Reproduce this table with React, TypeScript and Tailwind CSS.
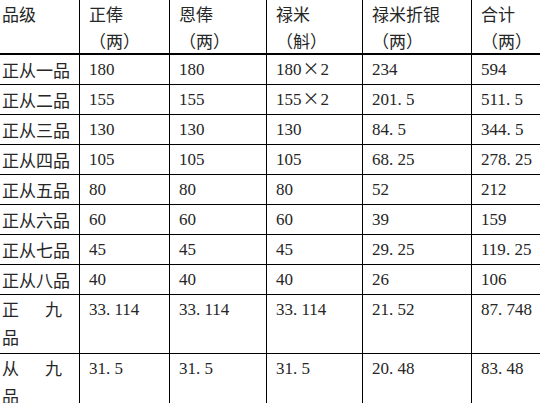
import React from "react";

const cols = "grid grid-cols-[80px_90px_97px_96px_109px_1fr]";

const rows: string[][] = [
  ["正从一品", "180", "180", "180×2", "234", "594"],
  ["正从二品", "155", "155", "155×2", "201.5", "511.5"],
  ["正从三品", "130", "130", "130", "84.5", "344.5"],
  ["正从四品", "105", "105", "105", "68.25", "278.25"],
  ["正从五品", "80", "80", "80", "52", "212"],
  ["正从六品", "60", "60", "60", "39", "159"],
  ["正从七品", "45", "45", "45", "29.25", "119.25"],
  ["正从八品", "40", "40", "40", "26", "106"],
];

const tallRows: { a: string; b: string; vals: string[] }[] = [
  { a: "正", b: "九", vals: ["33.114", "33.114", "33.114", "21.52", "87.748"] },
  { a: "从", b: "九", vals: ["31.5", "31.5", "31.5", "20.48", "83.48"] },
];

// SimSun style: dot and times sign take a full cell
const Num = ({ v }: { v: string }) => {
  const parts = v.split(/([.×])/);
  return (
    <span className="whitespace-nowrap">
      {parts.map((p, i) =>
        p === "." ? (
          <span key={i} className="inline-block w-[8.5px] text-left">.</span>
        ) : p === "×" ? (
          <span
            key={i}
            className="inline-block w-[19px] text-center leading-none font-['Noto_Sans_CJK_SC',sans-serif]"
          >
            ×
          </span>
        ) : (
          <span key={i}>{p}</span>
        )
      )}
    </span>
  );
};

const head = [
  ["正俸", "（两）"],
  ["恩俸", "（两）"],
  ["禄米", "（斛）"],
  ["禄米折银", "（两）"],
  ["合计", "（两）"],
];

export default function App() {
  return (
    <div className="w-[540px] h-[403px] overflow-hidden bg-white text-[#262626] text-[17px] font-['Liberation_Serif','Noto_Sans_CJK_SC',serif]">
      {/* header */}
      <div className={`${cols} h-[55px] border-b-2 border-black`}>
        <div className="border-r border-black pl-[2px] leading-[27px] font-['Noto_Sans_CJK_SC',sans-serif]">
          品级
        </div>
        {head.map(([t, u], i) => (
          <div
            key={t}
            className={`pl-[9px] leading-[27px] font-['Noto_Sans_CJK_SC',sans-serif] ${
              i < head.length - 1 ? "border-r border-black" : ""
            }`}
          >
            <div>{t}</div>
            <div>{u}</div>
          </div>
        ))}
      </div>

      {rows.map((r) => (
        <div key={r[0]} className={`${cols} h-[30px] border-b border-black`}>
          <div className="border-r border-black pl-[2px] pt-[1px] leading-[28px] font-['Noto_Sans_CJK_SC',sans-serif]">
            {r[0]}
          </div>
          {r.slice(1).map((v, i) => (
            <div
              key={i}
              className={`pl-[9px] pt-[1px] leading-[28px] ${i < 4 ? "border-r border-black" : ""}`}
            >
              <Num v={v} />
            </div>
          ))}
        </div>
      ))}

      {tallRows.map((r) => (
        <div key={r.a} className={`${cols} h-[59px] border-b border-black`}>
          <div className="border-r border-black pl-[2px] leading-[28px] font-['Noto_Sans_CJK_SC',sans-serif]">
            <div className="flex w-[60px] justify-between">
              <span>{r.a}</span>
              <span>{r.b}</span>
            </div>
            <div>品</div>
          </div>
          {r.vals.map((v, i) => (
            <div
              key={i}
              className={`pl-[9px] leading-[30px] ${i < 4 ? "border-r border-black" : ""}`}
            >
              <Num v={v} />
            </div>
          ))}
        </div>
      ))}
    </div>
  );
}
